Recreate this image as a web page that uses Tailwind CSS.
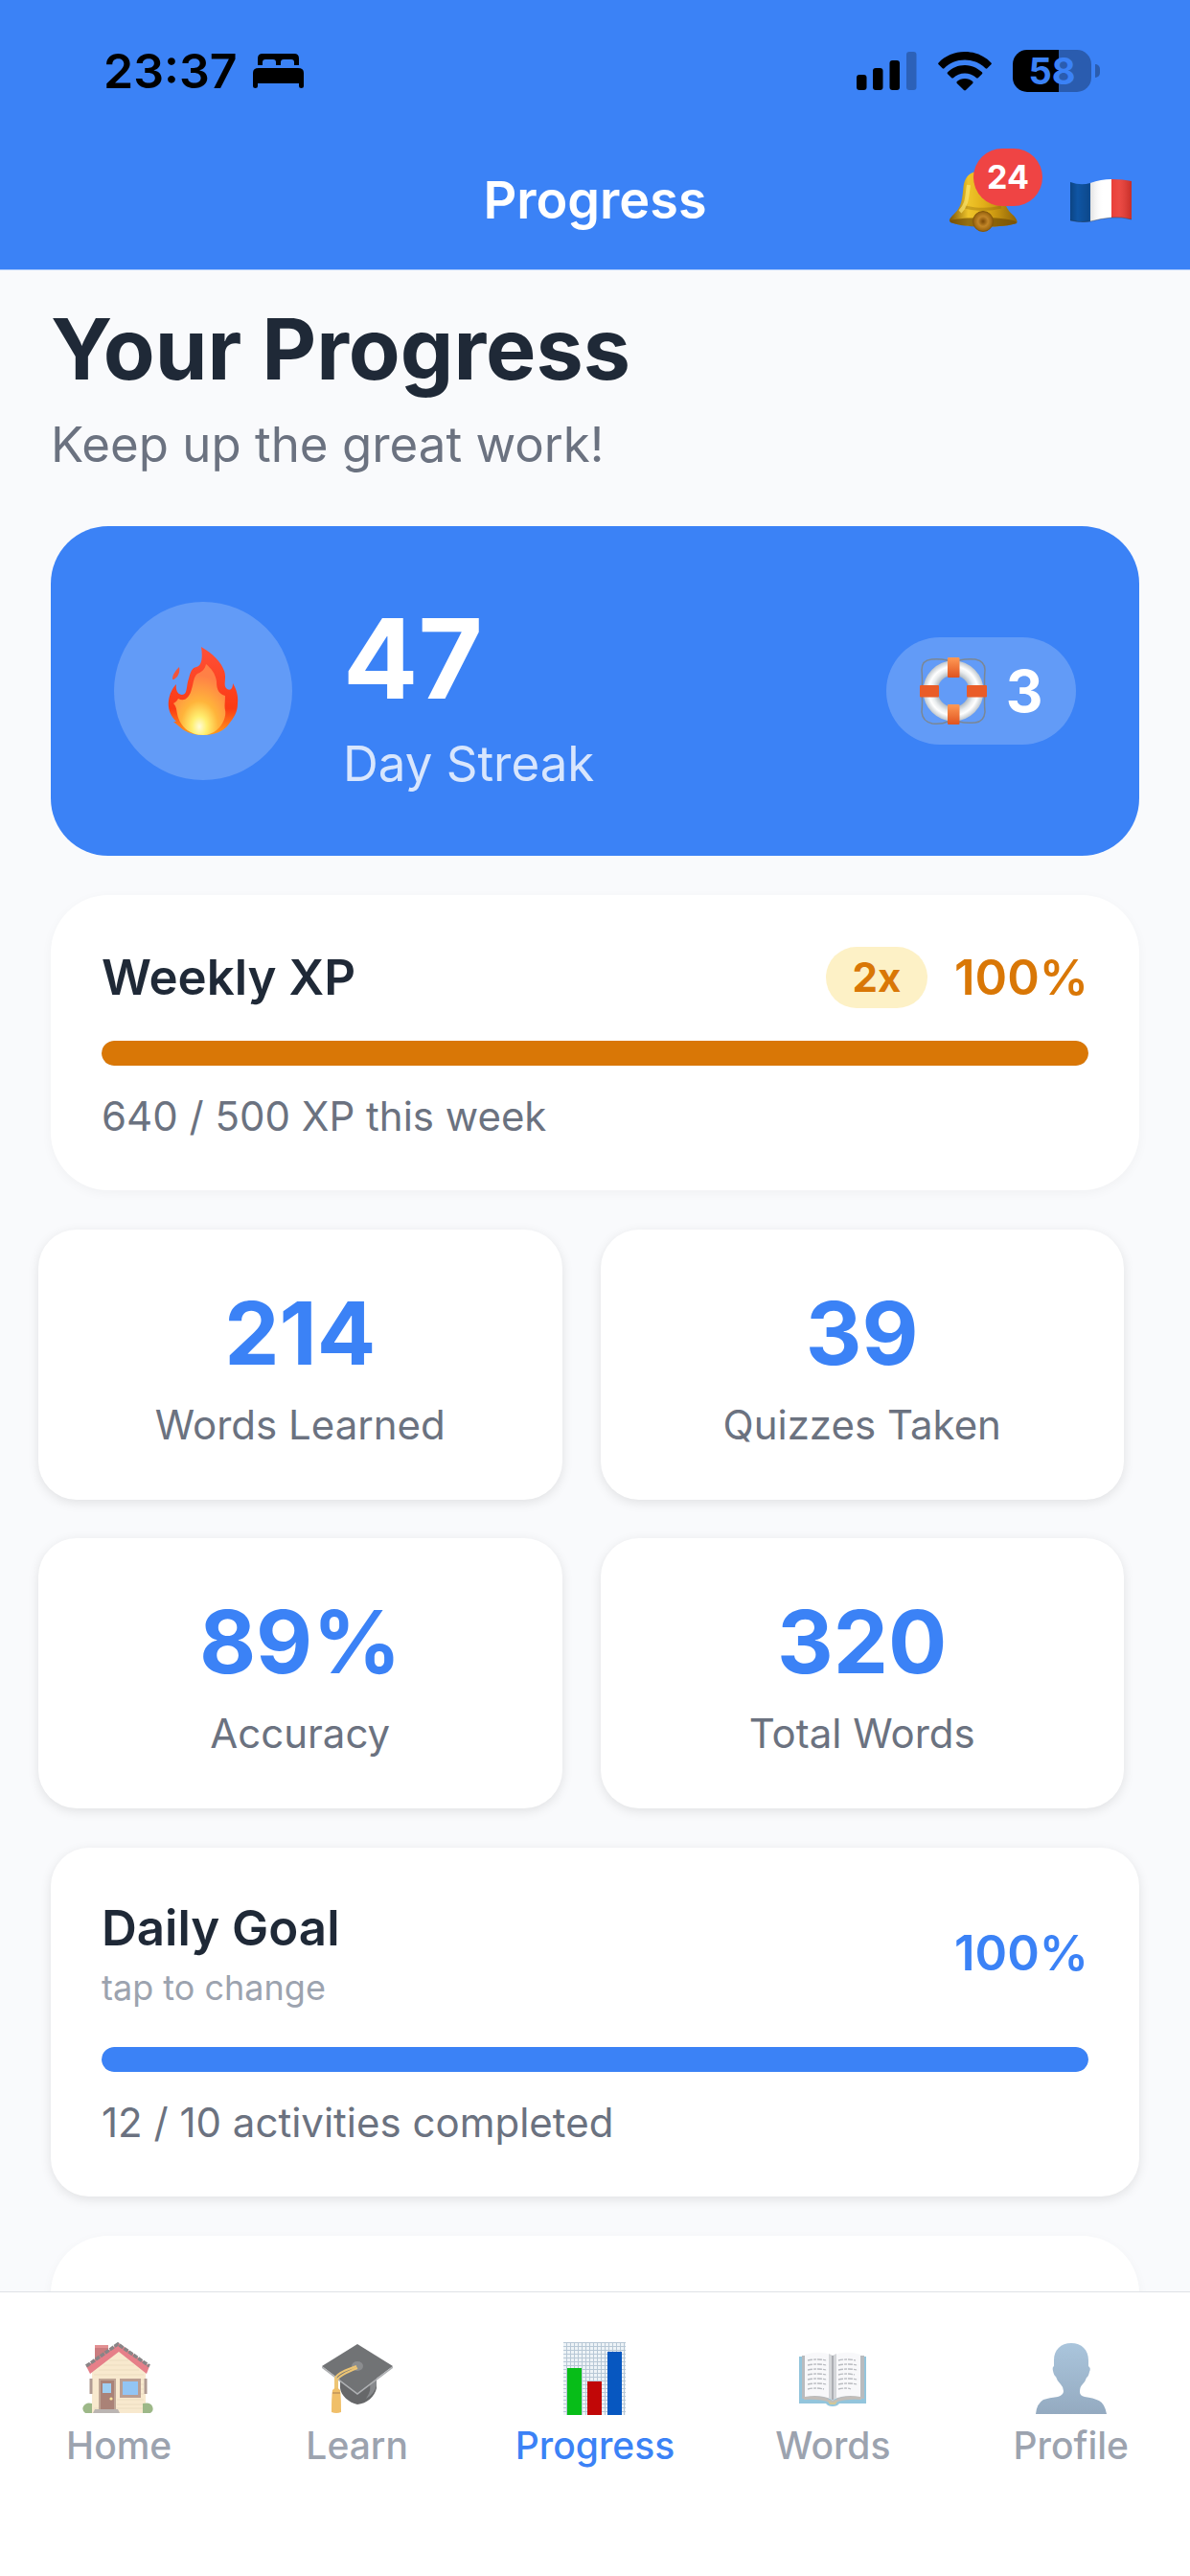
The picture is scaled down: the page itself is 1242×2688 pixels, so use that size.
<!DOCTYPE html>
<html lang="en">

<head>
  <meta charset="UTF-8">
  <meta name="viewport" content="width=device-width, initial-scale=1.0">
  <title>Progress</title>
  <script src="https://cdn.jsdelivr.net/npm/@tailwindcss/browser@4"></script>
</head>

<body class="flex h-screen flex-col overflow-hidden bg-[#f9fafc] font-['Inter','Liberation_Sans',sans-serif] text-[#1f2937]">
  <header class="flex-none border-b border-[#a9c8fb] bg-[#3b82f6] pb-[11px]">
    <!-- status bar -->
    <div class="flex h-[148px] items-center justify-between pr-[94px] pl-[108px] text-black">
      <div class="flex items-center gap-4">
        <span class="text-[50px] leading-[60px] font-semibold">23:37</span>
        <svg class="h-9 w-[53px]" viewBox="0 0 53 36" aria-hidden="true">
          <path d="M5 12V5q0-5 5-5h33q5 0 5 5v7h-5V9q0-3-3-3h-8q-3 0-3 3v3h-5V9q0-3-3-3h-8q-3 0-3 3v3z"/>
          <path d="M0 34V20q0-5 6-5h41q6 0 6 5v14q0 2-2.500 2T48 34v-3H5v3q0 2-2.500 2T0 34z"/>
        </svg>
      </div>
      <div class="flex items-center gap-[22px]">
        <svg class="h-10 w-[63px]" viewBox="0 0 63 40" aria-label="Signal">
          <rect x="0" y="24" width="10.500" height="16" rx="3"/>
          <rect x="17" y="17" width="10.500" height="23" rx="3"/>
          <rect x="34.500" y="9" width="10.500" height="31" rx="3"/>
          <rect x="52" y="0" width="10.500" height="40" rx="3" fill-opacity=".25"/>
        </svg>
        <svg class="h-[41px] w-14" viewBox="0 0 56 41" aria-label="Wi-Fi">
          <path d="M28 0C17 0 7.500 4.300.6 11.400q-.9 1 0 1.900l4 4q.9.900 1.900 0C12 11.800 19.500 8.500 28 8.500s16 3.300 21.500 8.800q1 .9 1.900 0l4-4q.9-.9 0-1.900C48.500 4.300 39 0 28 0z"/>
          <path d="M28 14c-7 0-13.300 2.800-17.900 7.300q-.9 1 0 1.900l4.100 4q.9.800 1.800 0c3.200-2.900 7.400-4.700 12-4.700s8.800 1.800 12 4.700q.9.800 1.800 0l4.100-4q.9-.9 0-1.900C41.300 16.800 35 14 28 14z"/>
          <path d="M28 28c-3.200 0-6 1.200-8.200 3.100q-.9.900 0 1.800l7.200 7.200q1 .9 2 0l7.200-7.200q.9-.9 0-1.800C34 29.200 31.200 28 28 28z"/>
        </svg>
        <div class="flex items-center gap-1">
          <div class="flex h-11 w-[82px] items-center justify-center rounded-[15px] bg-linear-to-r from-black from-58% to-[#2a5caf] to-58% text-[38px] leading-none font-bold text-[#3b82f6]">58</div>
          <div class="h-[14px] w-[5px] rounded-r-full bg-[#2a5caf]"></div>
        </div>
      </div>
    </div>

    <!-- title bar -->
    <div class="grid h-[122px] grid-cols-[1fr_auto_1fr] items-center text-white">
      <h1 class="col-start-2 text-[54px] leading-[64px] font-semibold">Progress</h1>
      <div class="flex items-center justify-end gap-[54px] pr-[60px]">
        <button class="relative" aria-label="Notifications">
          <svg class="h-[68px] w-[72px]" viewBox="0 0 72 68">
            <defs>
              <linearGradient id="brass" x1="0" x2="1">
                <stop offset="0" stop-color="#7d5506"/>
                <stop offset=".28" stop-color="#efc42a"/>
                <stop offset=".5" stop-color="#e2b01a"/>
                <stop offset=".7" stop-color="#c79410"/>
                <stop offset="1" stop-color="#8c6208"/>
              </linearGradient>
              <radialGradient id="clapper">
                <stop offset="0" stop-color="#7d4a06"/>
                <stop offset=".5" stop-color="#c28628"/>
                <stop offset="1" stop-color="#94600c"/>
              </radialGradient>
            </defs>
            <path d="M36 3C24 3 17 8 15.500 20 14 36 13 42 4 50q-5 5-2 7c14 6 56 6 69 1q2-2-3-8C59 42 58 36 56.500 20 55 8 48 3 36 3z" fill="url(#brass)"/>
            <path d="M2 55c13-4 55-4 68 1l1 2c-13 5-56 5-69-1z" fill="#6f4c06" opacity=".7"/>
            <path d="M17 41c13 3 27 3 38 0" fill="none" stroke="#8a6208" stroke-width="3" opacity=".35"/>
            <path d="M21 18c-2 12-1 20-9 28" fill="none" stroke="#ffec7a" stroke-width="4" opacity=".6"/>
            <circle cx="36" cy="56" r="10.500" fill="url(#clapper)" stroke="#85580d" stroke-width="1"/>
          </svg>
          <span class="absolute -top-5 left-[26px] flex h-15 w-[72px] items-center justify-center rounded-full bg-[#ef4444] text-[34px] leading-none font-bold">24</span>
        </button>
        <button aria-label="Language: French">
          <svg class="h-[46px] w-[66px]" viewBox="0 0 66 46">
            <defs>
              <linearGradient id="cloth" x1="0" x2="1">
                <stop offset="0" stop-color="#000" stop-opacity=".2"/>
                <stop offset=".12" stop-color="#000" stop-opacity="0"/>
                <stop offset=".3" stop-color="#000" stop-opacity=".14"/>
                <stop offset=".55" stop-color="#fff" stop-opacity="0"/>
                <stop offset=".8" stop-color="#fff" stop-opacity=".1"/>
                <stop offset="1" stop-color="#000" stop-opacity=".15"/>
              </linearGradient>
            </defs>
            <path d="M1 4q11 4 21 1v40q-10 2-21-1z" fill="#0f55a4"/>
            <path d="M22 5Q33 1 44 1v40q-11 1-22 4z" fill="#fff"/>
            <path d="M44 1q12 0 21 2v40q-10-3-21-2z" fill="#e9362f"/>
            <path d="M1 4q11 4 21 1Q33 1 44 1t21 2v40q-10-3-21-2t-22 4q-10 2-21-1z" fill="url(#cloth)"/>
            <path d="M1 44q11 3 21 1 11-3 22-4t21 2" fill="none" stroke="#333" stroke-opacity=".4"/>
          </svg>
        </button>
      </div>
    </div>
  </header>

  <main class="flex-1 overflow-hidden pt-7">
    <div class="px-[53px]">
      <h2 class="text-[88px] leading-[108px] font-bold">Your Progress</h2>
      <p class="mt-4 text-[51px] leading-[60px] text-[#6b7280]">Keep up the great work!</p>
    </div>

    <div class="mt-[55px] flex flex-col gap-[41px]">
      <!-- streak -->
      <section class="mx-[53px] flex h-[344px] items-center rounded-[60px] bg-[#3b82f6] px-[66px] text-white">
        <div class="flex size-[186px] flex-none items-center justify-center rounded-full bg-white/20">
          <svg class="h-[94px] w-[74px]" viewBox="0 0 74 94" aria-hidden="true">
            <defs>
              <radialGradient id="flame" cx=".5" cy=".88" r=".72">
                <stop offset="0" stop-color="#fffbd8"/>
                <stop offset=".2" stop-color="#ffef70"/>
                <stop offset=".5" stop-color="#ffb43b"/>
                <stop offset="1" stop-color="#ff8046"/>
              </radialGradient>
              <linearGradient id="flameEdge" x1="0" y1="0" x2="0" y2="1">
                <stop offset="0" stop-color="#ff5038"/>
                <stop offset=".7" stop-color="#fb3b14"/>
                <stop offset="1" stop-color="#ff9d1c"/>
              </linearGradient>
            </defs>
            <path d="M35 1c12 7 21 16 24 25 3 9-2 15 3 19 4 2 6-1 6-6 3 5 6 12 5 21 0 9-4 15-8 20l-3 4C56 90 48 93 37 93 27 93 18 90 12 84l-6-5 3 0C2 72 0 64 1 57 2 50 5 44 9 40c-1 7 2 11 6 11 6 0 4-9 7-17 2-7 3-11 8-12 5-1 7-8 5-21z" fill="url(#flameEdge)"/>
            <path d="M40 19c5 4 10 10 11 18 0 10 3 13 9 15 0 6-1 11 0 15 2 8-6 26-23 26S12 81 10 71c-1-5-1-8-4-11 2-1 4-3 5-5 7 4 12-2 14-10 2-6 2-13 6-16 5-2 8-5 9-10z" fill="url(#flame)"/>
            <path d="M12 22c1 5-1 9-3 11-2 2-4 3-4 1 0-4 4-9 7-12z" fill="#f3543a"/>
          </svg>
        </div>
        <div class="ml-[53px] flex flex-1 flex-col gap-3">
          <span class="text-[116px] leading-[140px] font-bold">47</span>
          <span class="text-[51px] leading-[56px] text-white/80">Day Streak</span>
        </div>
        <div class="flex h-28 w-[198px] items-center justify-center gap-5 rounded-full bg-white/20">
          <svg class="size-[70px]" viewBox="0 0 70 70" aria-label="Streak savers">
            <defs>
              <radialGradient id="ring" gradientUnits="userSpaceOnUse" cx="35" cy="35" r="32">
                <stop offset=".52" stop-color="#b4bcc2"/>
                <stop offset=".68" stop-color="#e9ecee"/>
                <stop offset=".8" stop-color="#fff"/>
                <stop offset="1" stop-color="#bac2c9"/>
              </radialGradient>
              <linearGradient id="strap" x1="0" y1="0" x2="0" y2="1">
                <stop offset="0" stop-color="#ff9a55"/>
                <stop offset="1" stop-color="#e0531f"/>
              </linearGradient>
            </defs>
            <path d="M29 3Q20 1 12 2 2 3 2 13q1 11 0 22 1 11 0 22 1 10 11 12 10 1 16-2M41 3q9-2 17-1 10 2 10 11-1 11 0 22-1 11 0 22-1 10-10 11-10 1-17-1" fill="none" stroke="#7b8794" stroke-width="1.500"/>
            <circle cx="35" cy="35" r="24" fill="none" stroke="url(#ring)" stroke-width="15"/>
            <rect x="29" y="0" width="12.500" height="21" rx="1" fill="url(#strap)"/>
            <rect x="29" y="49" width="12.500" height="21" rx="1" fill="url(#strap)"/>
            <rect x="0" y="29" width="20" height="12.500" rx="1" fill="#ea5c28"/>
            <rect x="49" y="29" width="21" height="12.500" rx="1" fill="#ea5c28"/>
          </svg>
          <span class="text-[60px] leading-none font-bold">3</span>
        </div>
      </section>

      <!-- weekly xp -->
      <section class="mx-[53px] rounded-[60px] bg-white px-[53px] py-[52px] shadow-[0_3px_12px_rgba(0,0,0,0.04)]">
        <div class="flex h-[68px] items-center justify-between">
          <h3 class="text-[51px] leading-[64px] font-semibold">Weekly XP</h3>
          <div class="flex items-center gap-7 text-[#d97706]">
            <span class="flex h-16 w-[106px] items-center justify-center rounded-full bg-[#fdf1c6] text-[42px] leading-none font-bold">2x</span>
            <span class="text-[51px] leading-[64px] font-semibold">100%</span>
          </div>
        </div>
        <div class="mt-8 h-[26px] overflow-hidden rounded-full bg-gray-200" role="progressbar" aria-label="Weekly XP" aria-valuenow="100">
          <div class="h-full rounded-full bg-[#d97706]" style="width: 100%"></div>
        </div>
        <p class="mt-7 text-[42px] leading-[50px] text-[#6b7280]">640 / 500 XP this week</p>
      </section>

      <!-- stats -->
      <section class="mr-[69px] ml-10 grid grid-cols-2 gap-10 text-center">
        <div class="rounded-[40px] bg-white py-[53px] shadow-[0_3px_12px_rgba(0,0,0,0.1)]">
          <div class="text-[91px] leading-[110px] font-bold text-[#3b82f6]">214</div>
          <div class="mt-4 text-[42px] leading-[50px] text-[#6b7280]">Words Learned</div>
        </div>
        <div class="rounded-[40px] bg-white py-[53px] shadow-[0_3px_12px_rgba(0,0,0,0.1)]">
          <div class="text-[91px] leading-[110px] font-bold text-[#3b82f6]">39</div>
          <div class="mt-4 text-[42px] leading-[50px] text-[#6b7280]">Quizzes Taken</div>
        </div>
        <div class="rounded-[40px] bg-white py-[53px] shadow-[0_3px_12px_rgba(0,0,0,0.1)]">
          <div class="text-[91px] leading-[110px] font-bold text-[#3b82f6]">89%</div>
          <div class="mt-4 text-[42px] leading-[50px] text-[#6b7280]">Accuracy</div>
        </div>
        <div class="rounded-[40px] bg-white py-[53px] shadow-[0_3px_12px_rgba(0,0,0,0.1)]">
          <div class="text-[91px] leading-[110px] font-bold text-[#3b82f6]">320</div>
          <div class="mt-4 text-[42px] leading-[50px] text-[#6b7280]">Total Words</div>
        </div>
      </section>

      <!-- daily goal, the whole card is tappable -->
      <button class="mx-[53px] block rounded-[40px] bg-white px-[53px] py-[52px] text-left shadow-[0_3px_12px_rgba(0,0,0,0.1)]">
        <span class="flex items-center justify-between">
          <span class="flex flex-col gap-2">
            <span class="text-[51px] leading-[64px] font-semibold">Daily Goal</span>
            <span class="text-[36px] leading-[44px] text-[#9ca3af]">tap to change</span>
          </span>
          <span class="text-[51px] leading-[64px] font-semibold text-[#3b82f6]">100%</span>
        </span>
        <span class="mt-10 block h-[26px] overflow-hidden rounded-full bg-gray-200" role="progressbar" aria-label="Daily goal" aria-valuenow="100">
          <span class="block h-full rounded-full bg-[#3b82f6]" style="width: 100%"></span>
        </span>
        <span class="mt-7 block text-[42px] leading-[50px] text-[#6b7280]">12 / 10 activities completed</span>
      </button>

      <section class="mx-[53px] h-80 rounded-[60px] bg-white shadow-[0_3px_12px_rgba(0,0,0,0.04)]"></section>
    </div>
  </main>

  <!-- tab bar -->
  <nav class="relative grid flex-none grid-cols-5 border-t border-[#dfe2e6] bg-white pt-[52px] pb-28 text-[39px] leading-[48px] font-medium text-[#9ca3af]">
    <a href="#home" class="flex flex-col items-center gap-2">
      <svg class="size-[76px] opacity-60" viewBox="0 0 76 76" aria-hidden="true">
        <rect x="13" y="3" width="14" height="22" fill="#a8262b"/>
        <rect x="13" y="3" width="14" height="3" fill="#d0474a"/>
        <path d="M10 27 38 6l28 21v47H10z" fill="#f4dcae"/>
        <path d="M28 19h20M22 24h32M17 29h42M12 34h52M12 69h52M58 39h6M58 44h6M58 49h6M58 54h6M36 60h28M36 65h28" stroke="#e2c896" stroke-width="1"/>
        <path d="M4 25 38 1l32 24-3 8L38 10 8 33z" fill="#d62b3c"/>
        <path d="M4 25 37 2l33 23" fill="none" stroke="#3b3436" stroke-width="3.500" stroke-dasharray="5 1"/>
        <path d="M9 38v16M66 38v16" stroke="#7d5a4c" stroke-width="3"/>
        <rect x="17" y="38" width="18" height="34" fill="#936b50"/>
        <rect x="19" y="40" width="14" height="31" fill="#72301d"/>
        <rect x="21" y="43" width="9" height="10" fill="#61aee8"/>
        <circle cx="30" cy="59" r="1.600" fill="#ffd75a"/>
        <rect x="39" y="38" width="22" height="20" fill="#8d5f4b"/>
        <rect x="42" y="41" width="16" height="14" fill="#4ba0ee"/>
        <path d="M10 74H3q-4-3-2-7 3-5 9-3zM63 64q8-2 10 3 2 5-2 7h-8z" fill="#5d8a3a"/>
        <path d="M13 70h24l2 4H11z" fill="#8e8480"/>
      </svg>
      Home
    </a>
    <a href="#learn" class="flex flex-col items-center gap-2">
      <svg class="size-[76px] opacity-70" viewBox="0 0 76 76" aria-hidden="true">
        <path d="M20 34h38v14c-2 9-10 16-20 17-9-2-17-9-18-17z" fill="#26282b"/>
        <path d="M50 41q4 8-3 18 9-5 11-14V36z" fill="#55585c"/>
        <path d="M38 2 1 25l37 28 37-28z" fill="#36383c"/>
        <path d="M1 25l37 28 37-28v2L38 55 1 27z" fill="#8c8f93"/>
        <ellipse cx="38" cy="25" rx="6" ry="5" fill="#5b5d60"/>
        <path d="M37 25C26 29 18 32 15 37v13M38 27c-10 4-19 8-21 12v12" fill="none" stroke="#e6ad3a" stroke-width="2"/>
        <path d="M12 50q4-5 8 0 1 6 1 23-5 2-10 0 0-17 1-23z" fill="#eba52a"/>
        <path d="M12 53h8" stroke="#b9771a" stroke-width="2"/>
      </svg>
      Learn
    </a>
    <a href="#progress" class="flex flex-col items-center gap-2 text-[#3b82f6]" aria-current="page">
      <svg class="size-[76px]" viewBox="0 0 76 76" aria-hidden="true">
        <defs>
          <pattern id="grid" width="4" height="4" patternUnits="userSpaceOnUse">
            <rect width="4" height="4" fill="#b8c8d6"/>
            <rect x="1" y="1" width="3" height="3" fill="#eef3f7"/>
          </pattern>
        </defs>
        <rect x="5" y="0" width="65" height="76" fill="url(#grid)"/>
        <rect x="9" y="27" width="15" height="49" fill="#07bd18"/>
        <rect x="30" y="41" width="15" height="35" fill="#c10707"/>
        <rect x="51" y="10" width="15" height="66" fill="#0757c0"/>
      </svg>
      Progress
    </a>
    <a href="#words" class="flex flex-col items-center gap-2">
      <svg class="size-[76px] opacity-60" viewBox="0 0 76 76" aria-hidden="true">
        <path d="M3 15h70v49H45q-2 3-7 3t-7-3H3z" fill="#4c9fc5"/>
        <path d="M6 14v45h65V14z" fill="#8b8f93"/>
        <path d="M8 57q15-2 30 4 15-6 30-4v3q-17-1-27 3h-6Q25 59 8 60z" fill="#9a928a"/>
        <path d="M9 13q16-5 29 1v46Q25 54 9 57z" fill="#f4f5f8"/>
        <path d="M67 13q-16-5-29 1v46q13-6 29-3z" fill="#f4f5f8"/>
        <path d="M34 12l4 2 4-2v46l-4 3-4-3z" fill="#b9bcc1"/>
        <path d="M38 14v46" stroke="#60646b" stroke-width="1.500"/>
        <path d="M12 19q10-2 20 0M12 24q10-2 20 0M12 29q10-2 20 0M12 34q10-2 20 0M12 39q10-2 20 0M12 44q10-2 20 0M12 49q9-2 17 0M44 19q10-2 18 0M44 24q10-2 20 0M44 29q10-2 20 0M44 34q10-2 17 0M44 39q10-2 20 0M44 44q10-2 20 0M44 49q8-2 13 0" fill="none" stroke="#8d9098" stroke-width="1.300" stroke-dasharray="5 1 3 1"/>
        <path d="M33 61q5 4 10 0l-2 4h-6z" fill="#b7a252"/>
      </svg>
      Words
    </a>
    <a href="#profile" class="flex flex-col items-center gap-2">
      <svg class="size-[76px]" viewBox="0 0 76 76" aria-hidden="true">
        <defs>
          <linearGradient id="bust" x1="0" y1="0" x2="0" y2="1">
            <stop offset="0" stop-color="#aac5dc"/>
            <stop offset="1" stop-color="#94aac0"/>
          </linearGradient>
        </defs>
        <path d="M38 1c11 0 18 7 18 18v6q3 2 1 6-1 5-3 6-1 4-5 8-2 2-2 7 0 4 5 5 9 1 15 4 6 3 8 14H1Q2 64 9 60q6-2 15-3 6-2 6-6 0-4-3-7-4-4-5-8-2-1-3-6-1-4 1-5v-6C20 8 27 1 38 1z" fill="url(#bust)"/>
      </svg>
      Profile
    </a>
  </nav>
</body>

</html>
